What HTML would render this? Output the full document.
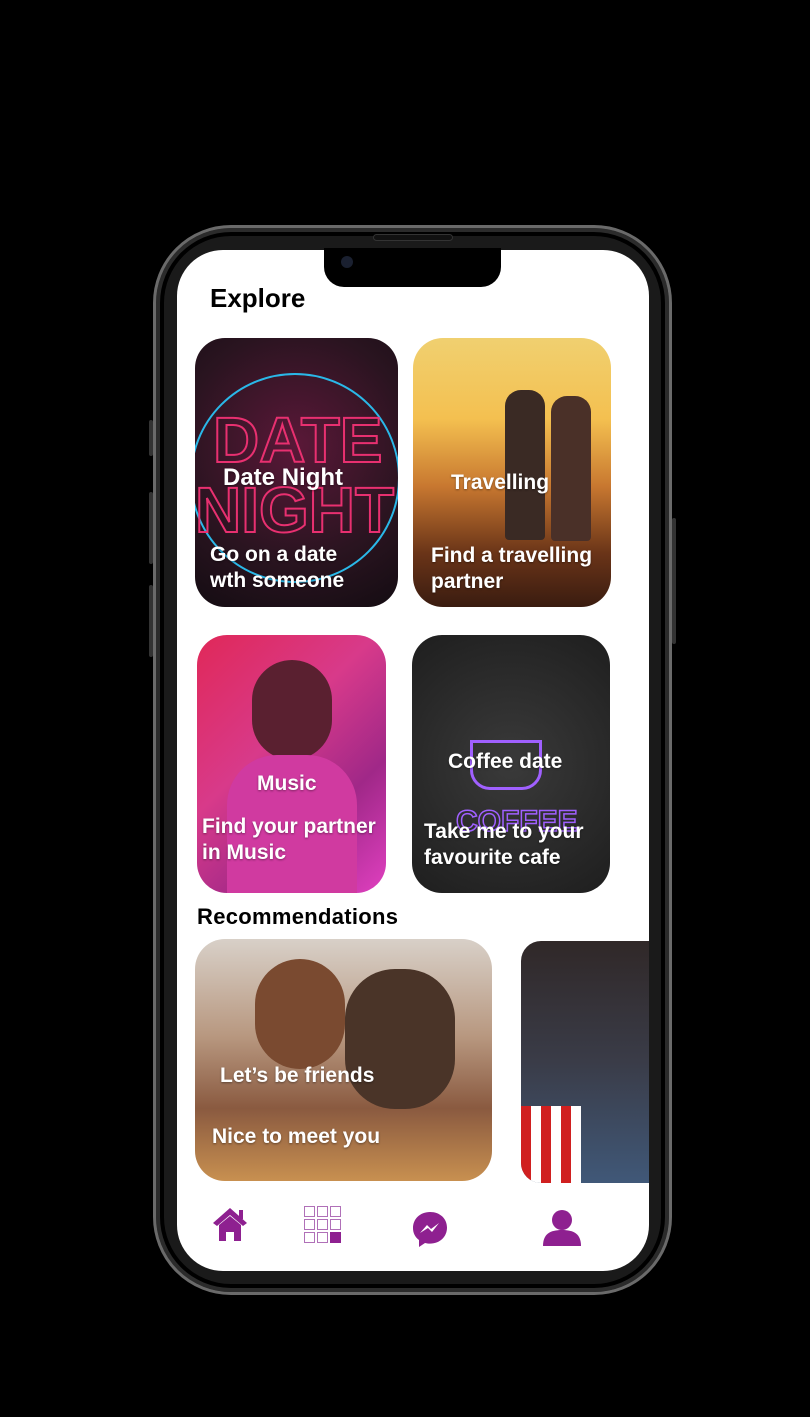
<!DOCTYPE html>
<html><head><style>
*{margin:0;padding:0;box-sizing:border-box}
body{width:810px;height:1417px;background:#000;position:relative;overflow:hidden;font-family:"Liberation Sans",sans-serif}
.phone{position:absolute;left:153px;top:225px;width:519px;height:1070px;border-radius:78px;background:#1a1a1a;border:3px solid #6a6a6a;box-shadow:inset 0 0 0 4px #2b2b2b,inset 0 0 0 8px #000}
.btn{position:absolute;background:#333;width:4px;border-radius:2px}
.screen{position:absolute;left:177px;top:250px;width:472px;height:1021px;border-radius:46px;background:#fff;overflow:hidden}
.notch{position:absolute;left:324px;top:248px;width:177px;height:39px;background:#000;border-radius:0 0 20px 20px}
.cam{position:absolute;left:341px;top:256px;width:12px;height:12px;border-radius:50%;background:#1a2030}
.spk{position:absolute;left:373px;top:234px;width:80px;height:7px;border-radius:4px;border:1px solid #333;background:#111}
.card{position:absolute;border-radius:30px;overflow:hidden;color:#fff;font-weight:bold}
.card span{position:absolute;font-size:21px;line-height:26px;text-shadow:0 1px 2px rgba(0,0,0,.4)}
h1{position:absolute;left:210px;top:283px;font-size:26px;font-weight:bold;color:#000}
h2{position:absolute;left:197px;top:904px;font-size:22px;font-weight:bold;color:#000;letter-spacing:.3px}
</style></head><body>
<div class="btn" style="left:149px;top:420px;height:36px"></div>
<div class="btn" style="left:149px;top:492px;height:72px"></div>
<div class="btn" style="left:149px;top:585px;height:72px"></div>
<div class="btn" style="left:672px;top:518px;height:126px"></div>
<div class="phone"></div>
<div class="screen"></div>
<div class="notch"></div><div class="spk"></div><div class="cam"></div>
<h1>Explore</h1>
<div class="card" style="left:195px;top:338px;width:203px;height:269px;background:radial-gradient(circle at 50% 40%,#5a1838,#2a1420 60%,#140c12)">
<div style="position:absolute;left:-5px;top:35px;width:210px;height:210px;border-radius:50%;border:2px solid #2ab8e8"></div>
<div style="position:absolute;left:18px;top:65px;font-size:64px;color:transparent;-webkit-text-stroke:2px #e83070;font-weight:bold">DATE</div>
<div style="position:absolute;left:0px;top:135px;font-size:64px;color:transparent;-webkit-text-stroke:2px #e83070;font-weight:bold">NIGHT</div>
<span style="left:28px;top:127px;font-size:24px">Date Night</span>
<span style="left:15px;top:204px">Go on a date<br>wth someone</span></div>
<div class="card" style="left:413px;top:338px;width:198px;height:269px;background:linear-gradient(180deg,#f0d070 0%,#f4c050 30%,#c87830 55%,#6a3418 80%,#3a1c10)">
<div style="position:absolute;left:92px;top:52px;width:40px;height:150px;background:#3a2a24;border-radius:16px 16px 4px 4px"></div>
<div style="position:absolute;left:138px;top:58px;width:40px;height:145px;background:#4a3028;border-radius:16px 16px 4px 4px"></div>
<span style="left:38px;top:132px">Travelling</span>
<span style="left:18px;top:205px">Find a travelling<br>partner</span></div>
<div class="card" style="left:197px;top:635px;width:189px;height:258px;background:linear-gradient(135deg,#e02858,#d83a8a 40%,#a02888 70%,#e040c0)">
<div style="position:absolute;left:55px;top:25px;width:80px;height:100px;border-radius:40px;background:#5a2030"></div>
<div style="position:absolute;left:30px;top:120px;width:130px;height:140px;border-radius:50px 50px 0 0;background:#d03aa0"></div>
<span style="left:60px;top:136px">Music</span>
<span style="left:5px;top:179px">Find your partner<br>in Music</span></div>
<div class="card" style="left:412px;top:635px;width:198px;height:258px;background:radial-gradient(circle at 50% 50%,#3a3a3a,#1e1e1e)">
<div style="position:absolute;left:58px;top:105px;width:72px;height:50px;border:3px solid #a060ff;border-radius:0 0 20px 20px"></div>
<div style="position:absolute;left:44px;top:170px;font-size:30px;color:transparent;-webkit-text-stroke:1.5px #a060ff">COFFEE</div>
<span style="left:36px;top:114px">Coffee date</span>
<span style="left:12px;top:184px">Take me to your<br>favourite cafe</span></div>
<h2>Recommendations</h2>
<div class="card" style="left:195px;top:939px;width:297px;height:242px;background:linear-gradient(180deg,#d8d0c8,#b89880 40%,#8a5a40 70%,#c89050)">
<div style="position:absolute;left:60px;top:20px;width:90px;height:110px;border-radius:45px;background:#7a4a30"></div>
<div style="position:absolute;left:150px;top:30px;width:110px;height:140px;border-radius:50px;background:#4a3428"></div>
<span style="left:25px;top:124px">Let’s be friends</span>
<span style="left:17px;top:185px">Nice to meet you</span></div>
<div class="card" style="left:521px;top:941px;width:128px;height:242px;border-radius:20px 0 0 20px;background:linear-gradient(180deg,#302828,#3a3c48 50%,#405878)">
<div style="position:absolute;left:0;top:165px;width:60px;height:77px;background:repeating-linear-gradient(90deg,#d02020 0 10px,#fff 10px 20px)"></div>
</div>
<svg style="position:absolute;left:211px;top:1205px" width="38" height="38" viewBox="0 0 38 38"><path d="M2 18 L19 3 L36 18 L32 21 L19 10 L6 21Z" fill="#8e2090"/><rect x="28" y="5" width="4" height="9" fill="#8e2090"/><path d="M8 20 L19 11 L30 20 V36 H23 V27 H15 V36 H8Z" fill="#8e2090"/></svg>
<svg style="position:absolute;left:304px;top:1206px" width="37" height="37"><g fill="none" stroke="#b070b8" stroke-width="1"><rect x="0.5" y="0.5" width="10" height="10"/><rect x="13.5" y="0.5" width="10" height="10"/><rect x="26.5" y="0.5" width="10" height="10"/><rect x="0.5" y="13.5" width="10" height="10"/><rect x="13.5" y="13.5" width="10" height="10"/><rect x="26.5" y="13.5" width="10" height="10"/><rect x="0.5" y="26.5" width="10" height="10"/><rect x="13.5" y="26.5" width="10" height="10"/></g><rect x="26" y="26" width="11" height="11" fill="#8e2090"/></svg>
<svg style="position:absolute;left:412px;top:1211px" width="36" height="38" viewBox="0 0 36 38"><path d="M18 1C8 1 1 8 1 17c0 5 2 9 6 12v7l6-4c2 .5 3 .6 5 .6 10 0 17-7 17-16S28 1 18 1Z" fill="#8e2090"/><path d="M8 22 L15 14 L19 18 L27 12 L20 21 L16 17Z" fill="#fff"/></svg>
<svg style="position:absolute;left:542px;top:1210px" width="40" height="36" viewBox="0 0 40 36"><ellipse cx="20" cy="10" rx="10" ry="10" fill="#8e2090"/><path d="M1 36 C1 24 8 20 20 20 C32 20 39 24 39 36Z" fill="#8e2090"/></svg>
</body></html>
